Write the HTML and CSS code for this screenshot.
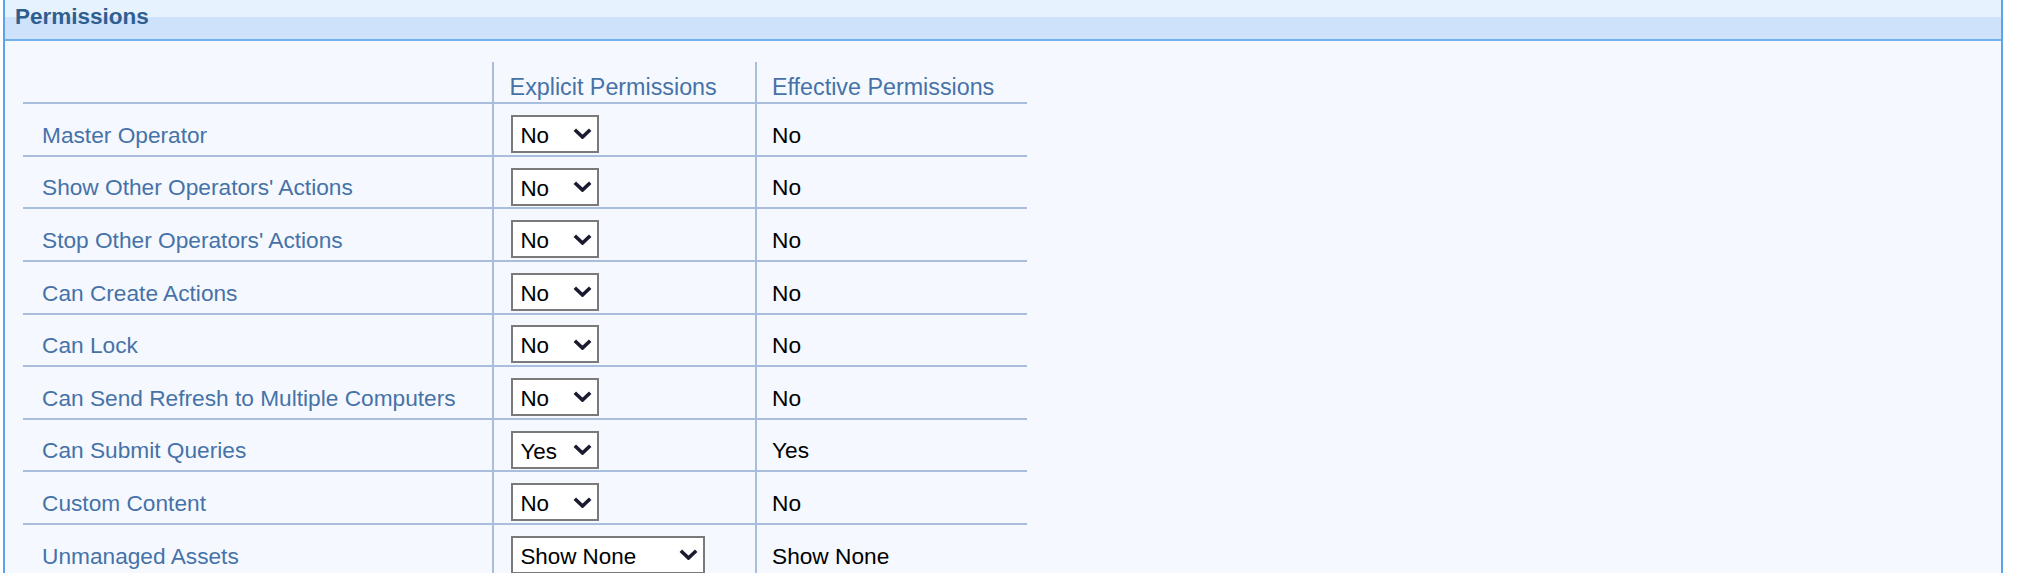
FILE: index.html
```html
<!DOCTYPE html>
<html>
<head>
<meta charset="utf-8">
<title>Permissions</title>
<link rel="stylesheet" href="styles.css">
</head>
<body>
<div class="panel">
  <div class="panel-head"><h2 class="panel-title">Permissions</h2></div>
  <div class="panel-body">
    <div class="perm-table">
      <div class="row head">
        <div class="cell c1"></div>
        <div class="cell c2">Explicit Permissions</div>
        <div class="cell c3">Effective Permissions</div>
      </div>
      <div class="row">
        <div class="cell c1">Master Operator</div>
        <div class="cell c2"><span class="select"><select><option>No</option><option>Yes</option></select><svg class="chev" viewBox="0 0 19 11" width="19" height="11"><path d="M1.8 1.8 L9.5 9 L17.2 1.8" fill="none" stroke="#1a1a30" stroke-width="3.6"/></svg></span></div>
        <div class="cell c3">No</div>
      </div>
      <div class="row">
        <div class="cell c1">Show Other Operators' Actions</div>
        <div class="cell c2"><span class="select"><select><option>No</option><option>Yes</option></select><svg class="chev" viewBox="0 0 19 11" width="19" height="11"><path d="M1.8 1.8 L9.5 9 L17.2 1.8" fill="none" stroke="#1a1a30" stroke-width="3.6"/></svg></span></div>
        <div class="cell c3">No</div>
      </div>
      <div class="row">
        <div class="cell c1">Stop Other Operators' Actions</div>
        <div class="cell c2"><span class="select"><select><option>No</option><option>Yes</option></select><svg class="chev" viewBox="0 0 19 11" width="19" height="11"><path d="M1.8 1.8 L9.5 9 L17.2 1.8" fill="none" stroke="#1a1a30" stroke-width="3.6"/></svg></span></div>
        <div class="cell c3">No</div>
      </div>
      <div class="row">
        <div class="cell c1">Can Create Actions</div>
        <div class="cell c2"><span class="select"><select><option>No</option><option>Yes</option></select><svg class="chev" viewBox="0 0 19 11" width="19" height="11"><path d="M1.8 1.8 L9.5 9 L17.2 1.8" fill="none" stroke="#1a1a30" stroke-width="3.6"/></svg></span></div>
        <div class="cell c3">No</div>
      </div>
      <div class="row">
        <div class="cell c1">Can Lock</div>
        <div class="cell c2"><span class="select"><select><option>No</option><option>Yes</option></select><svg class="chev" viewBox="0 0 19 11" width="19" height="11"><path d="M1.8 1.8 L9.5 9 L17.2 1.8" fill="none" stroke="#1a1a30" stroke-width="3.6"/></svg></span></div>
        <div class="cell c3">No</div>
      </div>
      <div class="row">
        <div class="cell c1">Can Send Refresh to Multiple Computers</div>
        <div class="cell c2"><span class="select"><select><option>No</option><option>Yes</option></select><svg class="chev" viewBox="0 0 19 11" width="19" height="11"><path d="M1.8 1.8 L9.5 9 L17.2 1.8" fill="none" stroke="#1a1a30" stroke-width="3.6"/></svg></span></div>
        <div class="cell c3">No</div>
      </div>
      <div class="row">
        <div class="cell c1">Can Submit Queries</div>
        <div class="cell c2"><span class="select"><select><option>Yes</option><option>No</option></select><svg class="chev" viewBox="0 0 19 11" width="19" height="11"><path d="M1.8 1.8 L9.5 9 L17.2 1.8" fill="none" stroke="#1a1a30" stroke-width="3.6"/></svg></span></div>
        <div class="cell c3">Yes</div>
      </div>
      <div class="row">
        <div class="cell c1">Custom Content</div>
        <div class="cell c2"><span class="select"><select><option>No</option><option>Yes</option></select><svg class="chev" viewBox="0 0 19 11" width="19" height="11"><path d="M1.8 1.8 L9.5 9 L17.2 1.8" fill="none" stroke="#1a1a30" stroke-width="3.6"/></svg></span></div>
        <div class="cell c3">No</div>
      </div>
      <div class="row">
        <div class="cell c1">Unmanaged Assets</div>
        <div class="cell c2"><span class="select wide"><select><option>Show None</option><option>Show All</option></select><svg class="chev" viewBox="0 0 19 11" width="19" height="11"><path d="M1.8 1.8 L9.5 9 L17.2 1.8" fill="none" stroke="#1a1a30" stroke-width="3.6"/></svg></span></div>
        <div class="cell c3">Show None</div>
      </div>
    </div>
  </div>
</div>
</body>
</html>
```
FILE: styles.css
```css
html, body {
  margin: 0;
  background: #ffffff;
  font-family: "Liberation Sans", Arial, sans-serif;
}

.panel {
  margin-left: 3px;
  width: 2000px;
  min-height: 100vh;
  box-sizing: border-box;
  border-left: 2px solid #5ba4e9;
  border-right: 2px solid #5ba4e9;
  background: #f5f9ff;
}

.panel-head {
  height: 39px;
  border-bottom: 2px solid #72b1ec;
  background: linear-gradient(#e6f2fe 0, #e6f2fe 17px, #cee3fb 17px, #cee3fb 100%);
}

.panel-title {
  margin: 0;
  padding: 4px 0 0 10px;
  font-size: 22.5px;
  line-height: 26px;
  font-weight: bold;
  color: #2f5e91;
}

.panel-body {
  padding: 21px 0 0 18px;
}

.perm-table {
  width: 1004px;
}

.row {
  display: grid;
  grid-template-columns: 471px 263px 270px;
  height: 52.6px;
  box-sizing: border-box;
  border-bottom: 2px solid #a9bedc;
}

.row.head {
  height: 42.3px;
}

.cell {
  box-sizing: border-box;
  padding-top: 17.6px;
  font-size: 22.7px;
  line-height: 26px;
  color: #4672a8;
  white-space: nowrap;
}

.c1 {
  border-right: 2px solid #a9bedc;
  padding-left: 19px;
}

.c2 {
  border-right: 2px solid #a9bedc;
  padding-left: 17.4px;
  padding-top: 10.7px;
}

.c3 {
  padding-left: 15px;
  color: #000000;
}

.row.head .cell {
  padding-top: 12px;
  font-size: 23.3px;
  color: #4672a8;
}

.row.head .c2 {
  padding-left: 15.6px;
}

.select {
  display: inline-flex;
  align-items: center;
  width: 88px;
  height: 38px;
  box-sizing: border-box;
  border: 2px solid #7a7a7a;
  background: #ffffff;
}

.select.wide {
  width: 194px;
}

.select select {
  appearance: none;
  -webkit-appearance: none;
  flex: 1;
  min-width: 0;
  height: 100%;
  margin: 0;
  padding: 3px 0 0 7px;
  border: 0;
  outline: none;
  background: transparent;
  font-family: "Liberation Sans", Arial, sans-serif;
  font-size: 22.4px;
  color: #000000;
}

.chev {
  flex: none;
  margin-right: 5px;
}
```
